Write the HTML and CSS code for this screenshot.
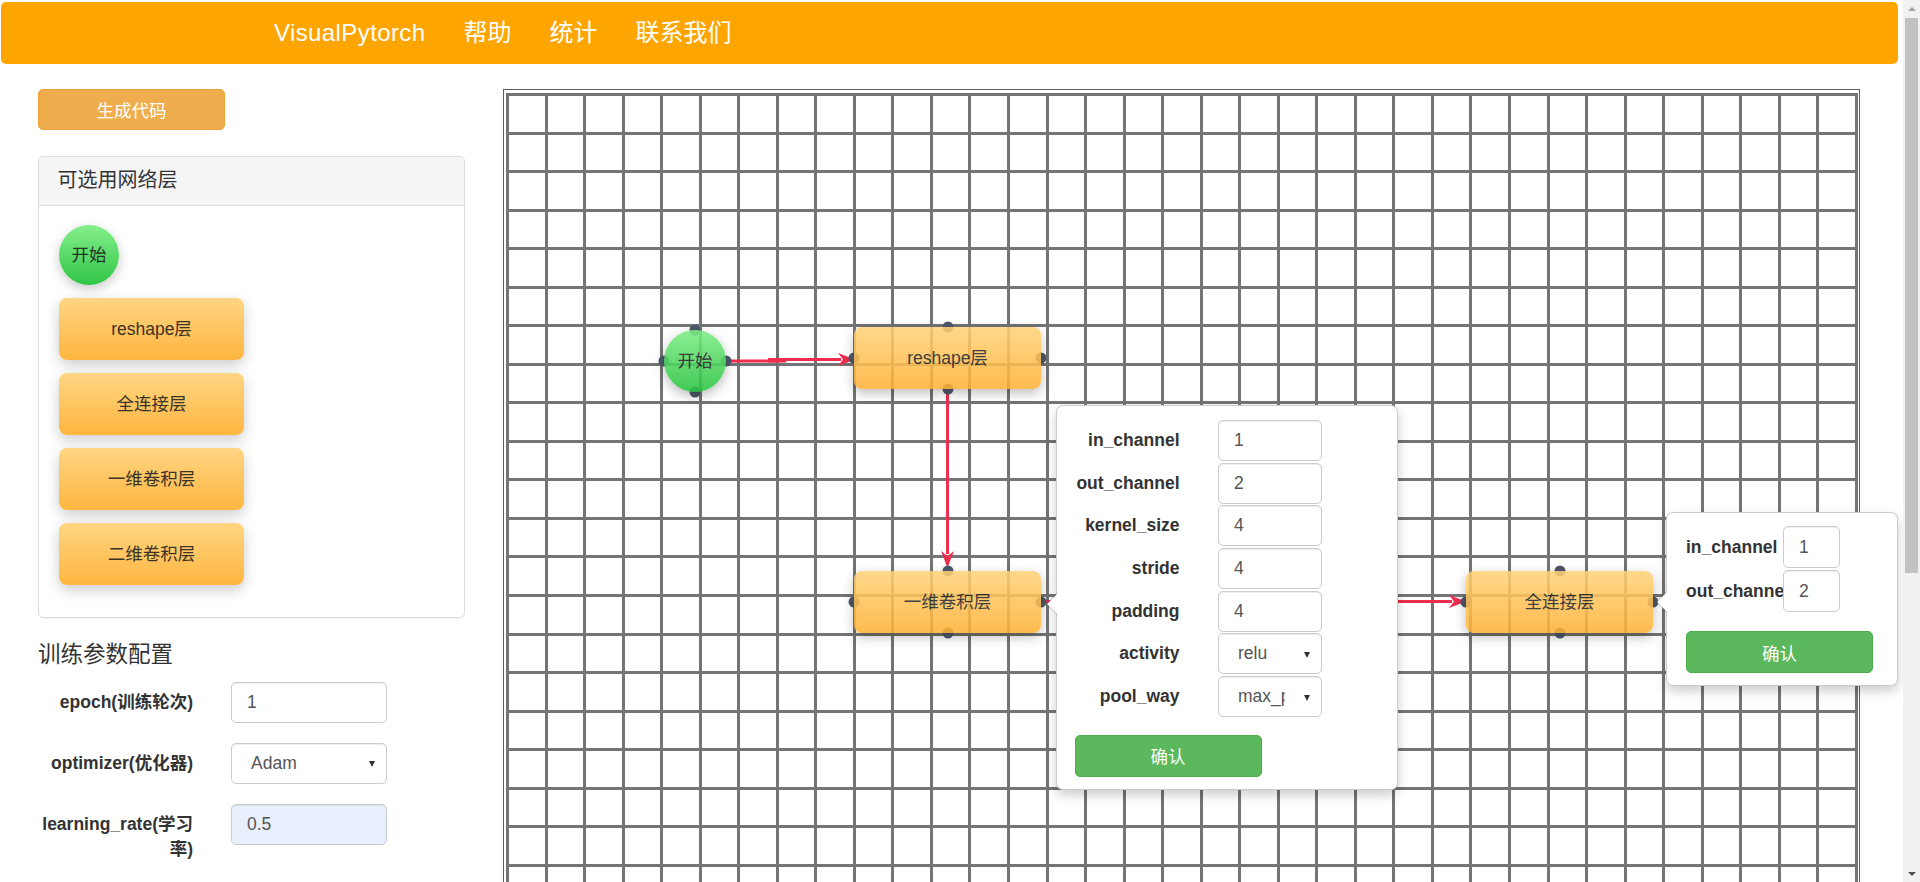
FILE: index.html
```html
<!DOCTYPE html>
<html lang="zh-CN">
<head>
<meta charset="utf-8">
<title>VisualPytorch</title>
<link rel="stylesheet" href="styles.css">
</head>
<body>
<div class="app">
  <div class="page">
    <nav class="navbar">
      <a class="nav-link brand" href="#">VisualPytorch</a>
      <a class="nav-link" href="#">帮助</a>
      <a class="nav-link" href="#">统计</a>
      <a class="nav-link" href="#">联系我们</a>
    </nav>

    <div class="main">
      <aside class="sidebar">
        <button class="btn btn-warning btn-gen" type="button">生成代码</button>

        <div class="panel">
          <div class="panel-heading">可选用网络层</div>
          <div class="panel-body">
            <div class="start-node">开始</div>
            <div class="layer-btn">reshape层</div>
            <div class="layer-btn">全连接层</div>
            <div class="layer-btn">一维卷积层</div>
            <div class="layer-btn">二维卷积层</div>
          </div>
        </div>

        <h4 class="section-title">训练参数配置</h4>
        <form class="params">
          <div class="form-row">
            <label class="row-label">epoch(训练轮次)</label>
            <input class="form-control" type="text" value="1">
          </div>
          <div class="form-row">
            <label class="row-label">optimizer(优化器)</label>
            <div class="form-control select"><span class="select-value">Adam</span></div>
          </div>
          <div class="form-row">
            <label class="row-label">learning_rate(学习率)</label>
            <input class="form-control autofill" type="text" value="0.5">
          </div>
          <div class="form-row">
            <label class="row-label"></label>
            <input class="form-control" type="text" value="">
          </div>
        </form>
      </aside>

      <section class="canvas">
        <svg class="links" width="1357" height="900" viewBox="0 0 1357 900">
          <g fill="none" stroke="#ef2d4f" stroke-width="3">
            <path d="M222 271H272V269.5H337"/>
            <path d="M264 270.3H282" stroke-width="4.5"/>
            <path d="M443.5 299V464"/>
            <path d="M537 511.5H948"/>
          </g>
          <g fill="#ef2d4f">
            <polygon points="351,269.5 334,263 339,269.5 334,276"/>
            <polygon points="443.5,478 437,461 443.5,466 450,461"/>
            <polygon points="962,511.5 945,505 950,511.5 945,518"/>
          </g>
        </svg>

        <div class="node n-start">
          <span class="dot dot-t"></span><span class="dot dot-b"></span><span class="dot dot-l"></span><span class="dot dot-r"></span>
          <div class="node-body circle">开始</div>
        </div>
        <div class="node rect n-reshape">
          <span class="dot dot-t"></span><span class="dot dot-b"></span><span class="dot dot-l"></span><span class="dot dot-r"></span>
          <div class="node-body">reshape层</div>
        </div>
        <div class="node rect n-conv1d">
          <span class="dot dot-t"></span><span class="dot dot-b"></span><span class="dot dot-l"></span><span class="dot dot-r"></span>
          <div class="node-body">一维卷积层</div>
        </div>
        <div class="node rect n-fc">
          <span class="dot dot-t"></span><span class="dot dot-b"></span><span class="dot dot-l"></span><span class="dot dot-r"></span>
          <div class="node-body">全连接层</div>
        </div>

        <div class="popover pop-conv">
          <div class="pop-form">
            <label class="pop-label">in_channel</label><input class="form-control" type="text" value="1">
            <label class="pop-label">out_channel</label><input class="form-control" type="text" value="2">
            <label class="pop-label">kernel_size</label><input class="form-control" type="text" value="4">
            <label class="pop-label">stride</label><input class="form-control" type="text" value="4">
            <label class="pop-label">padding</label><input class="form-control" type="text" value="4">
            <label class="pop-label">activity</label><div class="form-control select"><span class="select-value">relu</span></div>
            <label class="pop-label">pool_way</label><div class="form-control select"><span class="select-value">max_pool</span></div>
          </div>
          <button class="btn btn-success btn-ok" type="button">确认</button>
        </div>

        <div class="popover pop-fc">
          <div class="pop-form small">
            <label class="pop-label">in_channel</label><input class="form-control" type="text" value="1">
            <label class="pop-label">out_channel</label><input class="form-control" type="text" value="2">
          </div>
          <button class="btn btn-success btn-ok" type="button">确认</button>
        </div>
      </section>
    </div>
  </div>

  <div class="scrollbar">
    <div class="sb-btn"><span class="tri-up"></span></div>
    <div class="sb-thumb"></div>
    <div class="sb-space"></div>
    <div class="sb-btn"><span class="tri-down"></span></div>
  </div>
</div>
</body>
</html>
```

FILE: styles.css
```css
html, body {
  margin: 0;
  height: 100%;
  overflow: hidden;
}

body {
  font-family: "Liberation Sans", "Noto Sans CJK SC", sans-serif;
  font-size: 17.5px;
  line-height: 1.42857;
  color: #333;
  background: #fff;
}

* { box-sizing: border-box; }

.app {
  display: flex;
  height: 882px;
}

.page {
  flex: 1;
  min-width: 0;
  overflow: hidden;
}

/* ---------- navbar ---------- */
.navbar {
  margin: 2px 5px 0 1px;
  height: 62px;
  background: #ffa500;
  border-radius: 5px;
  display: flex;
  align-items: center;
  gap: 38px;
  padding-left: 273px;
}

.nav-link {
  color: #fff;
  font-size: 24px;
  line-height: 1;
  text-decoration: none;
}

.brand { letter-spacing: 0.4px; }

/* ---------- main ---------- */
.main {
  display: flex;
  align-items: flex-start;
  margin-top: 25px;
  padding-left: 38px;
  column-gap: 38px;
}

.sidebar {
  width: 427px;
  flex: none;
}

.btn {
  font-family: inherit;
  font-size: 17.5px;
  color: #fff;
  border-radius: 5px;
  border: 1px solid transparent;
  display: flex;
  align-items: center;
  justify-content: center;
  padding: 0;
}

.btn-warning {
  background: #f0ad4e;
  border-color: #eea236;
}

.btn-success {
  background: #5cb85c;
  border-color: #4cae4c;
}

.btn-gen {
  width: 187px;
  height: 41px;
}

.panel {
  margin-top: 25.5px;
  border: 1px solid #ddd;
  border-radius: 5px;
  box-shadow: 0 1px 1px rgba(0, 0, 0, 0.05);
}

.panel-heading {
  height: 49px;
  padding: 0 18.5px;
  display: flex;
  align-items: center;
  background: #f5f5f5;
  border-bottom: 1px solid #ddd;
  border-radius: 4px 4px 0 0;
  font-size: 20px;
}

.panel-body {
  padding: 19.5px 20px 32px;
  display: flex;
  flex-direction: column;
  align-items: flex-start;
  gap: 13px;
}

.start-node {
  width: 60px;
  height: 60px;
  border-radius: 50%;
  background: linear-gradient(#86ef8c, #2fc546);
  box-shadow: 0 4px 12px rgba(0, 0, 0, 0.22);
  display: flex;
  align-items: center;
  justify-content: center;
  color: #1f3424;
}

.layer-btn {
  width: 185px;
  height: 62px;
  border-radius: 8px;
  background: linear-gradient(#ffd583, #ffb640);
  box-shadow: 0 5px 14px rgba(0, 0, 0, 0.2);
  display: flex;
  align-items: center;
  justify-content: center;
  color: #3a3326;
}

.section-title {
  margin: 25px 0 14px;
  font-size: 22.5px;
  font-weight: normal;
  line-height: 1.1;
}

.form-row {
  display: flex;
  align-items: flex-start;
  column-gap: 38px;
  margin-bottom: 20px;
}

.row-label {
  width: 155px;
  flex: none;
  text-align: right;
  font-weight: bold;
  padding-top: 8px;
  line-height: 25px;
}

.form-control {
  display: block;
  height: 41px;
  width: 156px;
  padding: 0 15px;
  font-family: inherit;
  font-size: 17.5px;
  color: #555;
  background: #fff;
  border: 1px solid #ccc;
  border-radius: 5px;
  box-shadow: inset 0 1px 1px rgba(0, 0, 0, 0.075);
  outline: none;
}

.form-control.autofill {
  background: #e8f0fe;
}

.select {
  position: relative;
  display: flex;
  align-items: center;
  padding: 0 36px 0 19px;
}

.select-value {
  display: block;
  white-space: nowrap;
  overflow: hidden;
}

.select::after {
  content: "";
  position: absolute;
  right: 11px;
  top: 50%;
  margin-top: -2px;
  border-left: 3.5px solid transparent;
  border-right: 3.5px solid transparent;
  border-top: 6px solid #333;
}

/* ---------- canvas ---------- */
.canvas {
  position: relative;
  flex: none;
  width: 1357px;
  height: 900px;
  border: 1px solid #5e5e5e;
  background:
    repeating-linear-gradient(90deg, #747474 0 3px, transparent 3px 38.54px) 2.2px 2.8px / 1352px 100% no-repeat,
    repeating-linear-gradient(180deg, #747474 0 3px, transparent 3px 38.54px) 2.2px 2.8px / 1352px 100% no-repeat,
    #fff;
}

.links {
  position: absolute;
  left: 0;
  top: 0;
  overflow: visible;
}

.node {
  position: absolute;
}

.node.rect {
  width: 187px;
  height: 62px;
}

.n-start { left: 160px; top: 240px; width: 62px; height: 62px; }
.n-reshape { left: 350px; top: 237px; }
.n-conv1d { left: 350px; top: 481px; }
.n-fc { left: 962px; top: 481px; }

.dot {
  position: absolute;
  width: 11px;
  height: 11px;
  border-radius: 50%;
  background: #4f596c;
  transform: translate(-50%, -50%);
}

.dot-t { left: 50%; top: 0; }
.dot-b { left: 50%; top: 100%; }
.dot-l { left: 0; top: 50%; }
.dot-r { left: 100%; top: 50%; }

.node-body {
  position: relative;
  width: 100%;
  height: 100%;
  border-radius: 8px;
  background: linear-gradient(#ffd278, #ffb133);
  opacity: 0.86;
  box-shadow: 0 4px 12px rgba(0, 0, 0, 0.3);
  display: flex;
  align-items: center;
  justify-content: center;
  color: #222;
}

.node-body.circle {
  border-radius: 50%;
  background: linear-gradient(#7eee85, #28c23f);
  opacity: 0.88;
}

/* ---------- popovers ---------- */
.popover {
  position: absolute;
  background: #fff;
  border: 1px solid rgba(0, 0, 0, 0.2);
  border-radius: 7px;
  box-shadow: 0 5px 12px rgba(0, 0, 0, 0.2);
  z-index: 5;
}

.popover::before,
.popover::after {
  content: "";
  position: absolute;
  border-style: solid;
  border-color: transparent;
}

.popover::before {
  left: -11px;
  border-width: 11px 11px 11px 0;
  border-right-color: rgba(0, 0, 0, 0.25);
}

.popover::after {
  left: -10px;
  border-width: 10px 10px 10px 0;
  border-right-color: #fff;
}

.pop-conv {
  left: 551.5px;
  top: 315px;
  width: 342px;
  padding: 14px 18px 12px;
}

.pop-conv::before { top: 187px; }
.pop-conv::after { top: 188px; }

.pop-fc {
  left: 1162px;
  top: 422px;
  width: 232px;
  padding: 13px 20px 12px 19px;
}

.pop-fc::before { top: 78px; }
.pop-fc::after { top: 79px; }

.pop-form {
  display: grid;
  grid-template-columns: 105px 104px;
  column-gap: 38.5px;
  row-gap: 1.7px;
  align-items: center;
}

.pop-form .form-control {
  width: 104px;
}

.pop-label {
  font-weight: bold;
  text-align: right;
  white-space: nowrap;
}

.pop-form.small {
  grid-template-columns: 97px 57px;
  column-gap: 0;
  row-gap: 2px;
}

.pop-form.small .form-control {
  width: 57px;
  height: 42px;
}

.pop-form.small .pop-label {
  text-align: left;
  overflow: hidden;
}

.btn-ok {
  width: 187px;
  height: 41.5px;
  margin-top: 18px;
}

.pop-fc .btn-ok {
  height: 42px;
  margin-top: 19px;
}

/* ---------- scrollbar ---------- */
.scrollbar {
  width: 17px;
  flex: none;
  background: #f1f1f1;
  display: flex;
  flex-direction: column;
}

.sb-btn {
  height: 17px;
  display: flex;
  align-items: center;
  justify-content: center;
}

.tri-up {
  border-left: 4px solid transparent;
  border-right: 4px solid transparent;
  border-bottom: 4px solid #a3a3a3;
}

.tri-down {
  border-left: 4px solid transparent;
  border-right: 4px solid transparent;
  border-top: 4px solid #505050;
}

.sb-thumb {
  margin: 1px 2px 0;
  height: 555px;
  background: #c1c1c1;
}

.sb-space { flex: 1; }
```
